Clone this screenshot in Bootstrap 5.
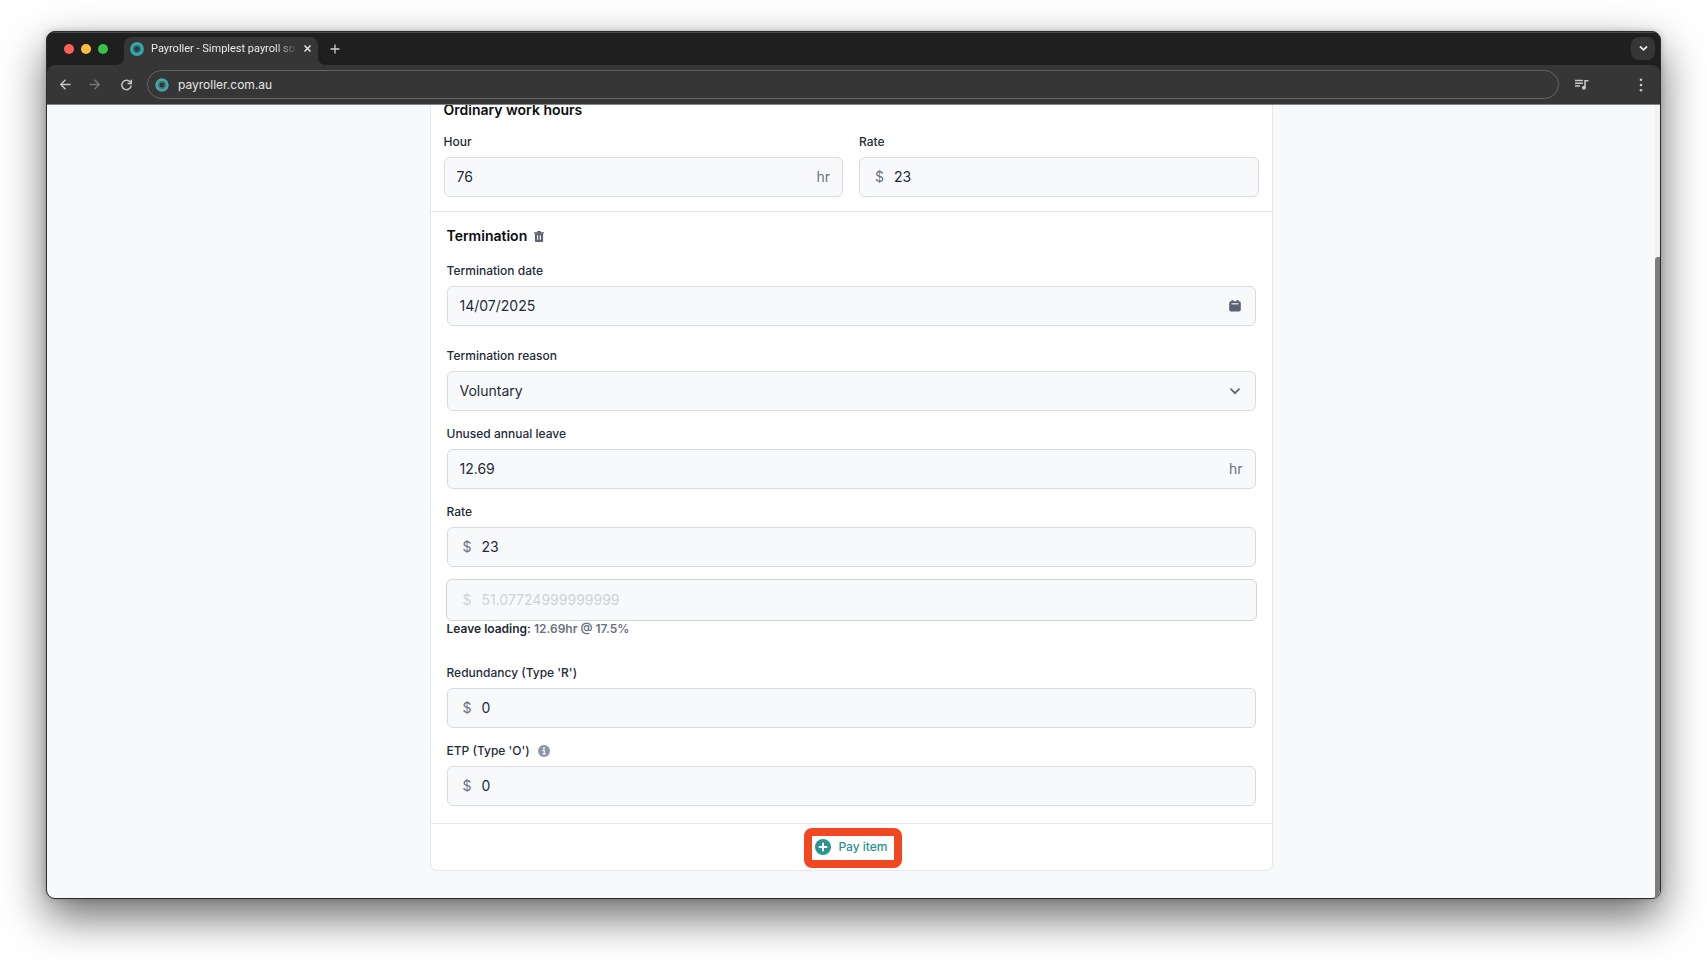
<!DOCTYPE html>
<html lang="en">
<head>
<meta charset="utf-8">
<meta name="viewport" content="width=device-width, initial-scale=1">
<title>Payroller - Simplest payroll software</title>
<link href="https://cdn.jsdelivr.net/npm/bootstrap@5.3.0/dist/css/bootstrap.min.css" rel="stylesheet">
<style>
  body { font-family: Inter, "Liberation Sans", sans-serif; font-size: 12px; line-height: 16px; color: #252b37; background: #fff; padding: 31px 46px 61px; }
  svg { display: block; flex: none; }
  button { color: inherit; }
  .plain { background: none; border: 0; padding: 0; }

  /* browser window */
  .browser { border: 1px solid #2b2b2b; border-radius: 9px; overflow: hidden; background: #1f1f1f; box-shadow: 0 18px 44px rgba(0,0,0,.58), 0 0 6px rgba(0,0,0,.2); }
  .titlebar { height: 33px; padding: 5px 5px 0 17px; box-shadow: inset 0 1px #4a4a4a; color: #dedede; }
  .lights { gap: 7px; padding-bottom: 11px; }
  .light { width: 10px; height: 10px; border-radius: 50%; }
  .light.red { background: #ff5f57; }
  .light.amber { background: #febc3f; }
  .light.green { background: #32c547; }
  .tab-item { width: 194px; height: 28px; margin-left: 16px; padding: 0 8px 5px 6px; gap: 7px; background: #363636; border-radius: 8px 8px 0 0; font: 11px/16px Roboto, "Liberation Sans", sans-serif; position: relative; }
  .tab-item::before, .tab-item::after { content: ""; position: absolute; bottom: 0; width: 8px; height: 8px; }
  .tab-item::before { left: -8px; background: radial-gradient(circle at 0 0, transparent 8px, #363636 8px); }
  .tab-item::after { right: -8px; background: radial-gradient(circle at 100% 0, transparent 8px, #363636 8px); }
  .tab-title { color: #ececec; white-space: nowrap; -webkit-mask-image: linear-gradient(90deg, #000 86%, transparent 102%); mask-image: linear-gradient(90deg, #000 86%, transparent 102%); }
  .new-tab { margin-left: 12px; padding-bottom: 11px; }
  .tab-search { width: 24px; height: 23px; border-radius: 8px; background: #363636; margin-bottom: 5px; }
  .toolbar { height: 40px; padding: 0 15px 0 12px; background: #363636; border-bottom: 1px solid #858585; border-radius: 8px 8px 0 0; color: #c7c7c7; }
  .omnibox { height: 29px; border: 1px solid #646464; border-radius: 15px; padding: 0 7px; margin-left: 15px; gap: 9px; }
  .omnibox input { background: none; border: 0; padding: 0; color: #e6e6e6; outline: 0; font-size: 12px; }
  .dim { color: #777; }

  /* page */
  .page { background: #f8f9fb; }
  .page-body { overflow: hidden; padding-bottom: 27px; }
  .pay { max-width: 843px; margin: 0 auto; background: #fff; border: 1px solid #e5e7eb; border-top: 0; border-radius: 0 0 7px 7px; }
  .ordinary { padding: 0 13px 14px; }
  .termination { padding: 14px 16px 17px; border-top: 1px solid #e5e7eb; border-bottom: 1px solid #e5e7eb; }
  h2 { font-size: 14px; line-height: 20px; font-weight: 600; color: #0b0c0f; margin: 0; }
  .ordinary h2 { line-height: 10px; margin-bottom: 19px; }
  .section-head { gap: 7px; margin-bottom: 17px; }
  label { display: block; font-weight: 500; }
  .form-row { margin-bottom: 15px; }
  .form-row.roomy { margin-bottom: 22px; }
  .field { height: 40px; margin-top: 7px; background: #f8f9fb; border: 1px solid #d8dbe1; border-radius: 6px; padding: 0 12px; font-size: 14px; color: #6b7280; }
  .field input, .field select { flex: 1; min-width: 0; border: 0; background: none; padding: 0; outline: 0; color: #252b37; appearance: none; -webkit-appearance: none; }
  .field.money { padding-left: 15px; gap: 10px; }
  .field.locked { height: 42px; margin: 12px -1px 0; padding-left: 16px; color: #cfd2d8; border-color: #d1d4db; }
  .field.locked input { color: #cfd2d8; }
  .field-icon { margin-right: 2px; }
  .loading-note { font-weight: 600; margin: 0 0 28px; }
  .loading-note span { color: #6b7280; }
  .actions { height: 46px; padding-top: 4px; }
  .pay-item { border: 8px solid #f24822; border-radius: 8px; height: 40px; width: 98px; margin-left: 3px; background: #fff; color: #2a9490; font-weight: 500; gap: 7px; padding: 0 2px 2px 0; }
  .scroll { width: 5px; padding-top: 152px; background: #f1f2f4; }
  .thumb { background: #7d7d7d; border-radius: 3px 0 0 0; height: 100%; }
</style>
</head>
<body>
<div class="browser">
  <header class="titlebar d-flex align-items-end">
    <div class="lights d-flex">
      <span class="light red"></span>
      <span class="light amber"></span>
      <span class="light green"></span>
    </div>
    <div class="tab-item d-flex align-items-center">
      <svg width="14" height="14" viewBox="0 0 14 14"><circle cx="7" cy="7" r="4.900" fill="none" stroke="#35a8ab" stroke-width="4"/><circle cx="7" cy="7" r="3.400" fill="none" stroke="#26777e" stroke-width="1.200"/></svg>
      <span class="tab-title">Payroller - Simplest payroll so</span>
      <button class="plain ms-auto" aria-label="Close tab"><svg width="11" height="11" viewBox="0 0 11 11" stroke="#e6e6e6" stroke-width="1.500"><path d="M2.500 2.500l6 6M8.500 2.500l-6 6"/></svg></button>
    </div>
    <button class="plain new-tab" aria-label="New tab"><svg width="10" height="10" viewBox="0 0 10 10" stroke="#cfcfcf" stroke-width="1.300"><path d="M5 .5v9M.5 5h9"/></svg></button>
    <button class="plain tab-search ms-auto d-flex align-items-center justify-content-center" aria-label="Search tabs"><svg width="9" height="7" viewBox="0 0 9 7" fill="none" stroke="#e6e6e6" stroke-width="1.800"><path d="M1 1.500l3.500 3.300L8 1.500"/></svg></button>
  </header>
  <nav class="toolbar d-flex align-items-center">
    <button class="plain" aria-label="Back"><svg width="13" height="13" viewBox="0 0 13 13" fill="none" stroke="currentColor" stroke-width="1.400"><path d="M11.500 6.500H2M6.500 1.800L1.800 6.500l4.700 4.700"/></svg></button>
    <button class="plain dim ms-3" aria-label="Forward"><svg width="13" height="13" viewBox="0 0 13 13" fill="none" stroke="currentColor" stroke-width="1.400"><path d="M1.500 6.500H11M6.500 1.800l4.700 4.700-4.700 4.700"/></svg></button>
    <button class="plain ms-3 ps-1" aria-label="Reload"><svg width="11" height="12" viewBox="0.500 0 11 12" fill="none" stroke="currentColor" stroke-width="1.500"><path d="M10.700 6.500A4.700 4.700 0 1 1 9.500 2.800L10.500 4"/><path d="M10.800.8v3.700H7.100"/></svg></button>
    <div class="omnibox d-flex align-items-center flex-fill">
      <svg width="14" height="14" viewBox="0 0 14 14"><circle cx="7" cy="7" r="4.700" fill="none" stroke="#4ba3a6" stroke-width="4"/><circle cx="7" cy="7" r="3.400" fill="none" stroke="#33777c" stroke-width="1.200"/></svg>
      <input class="flex-fill" aria-label="Address" value="payroller.com.au">
    </div>
    <button class="plain ms-3" aria-label="Media"><svg width="14" height="12" viewBox="0 0 14 12"><path d="M0 1.500h8M0 4.200h8M0 7h5" stroke="currentColor" stroke-width="1.500"/><path d="M10 8.500V1.700h3.400" fill="none" stroke="currentColor" stroke-width="1.600"/><circle cx="8.900" cy="8.800" r="2" fill="currentColor"/></svg></button>
    <button class="plain ms-5" aria-label="Menu"><svg width="8" height="14" viewBox="0 0 8 14" fill="currentColor"><circle cx="4" cy="1.700" r="1.300"/><circle cx="4" cy="7" r="1.300"/><circle cx="4" cy="12.300" r="1.300"/></svg></button>
  </nav>

  <div class="page d-flex">
    <main class="page-body flex-fill">
      <form class="pay">
        <section class="ordinary">
          <h2>Ordinary work hours</h2>
          <div class="row gx-3">
            <div class="col">
              <label for="hour">Hour</label>
              <div class="field d-flex align-items-center"><input id="hour" value="76"><span>hr</span></div>
            </div>
            <div class="col">
              <label for="rate">Rate</label>
              <div class="field money d-flex align-items-center"><span>$</span><input id="rate" value="23"></div>
            </div>
          </div>
        </section>

        <section class="termination">
          <div class="section-head d-flex align-items-center">
            <h2>Termination</h2>
            <button type="button" class="plain" aria-label="Delete termination"><svg width="10" height="11" viewBox="0 0 11 12"><path d="M3.500 0h4v1.200H11v1.600H0V1.200h3.500z" fill="#5d6474"/><path d="M1 2.500h9V11a1 1 0 0 1-1 1H2a1 1 0 0 1-1-1z" fill="#5d6474"/><path d="M4 4.500v5M7 4.500v5" stroke="#fff" stroke-width="1.200"/></svg></button>
          </div>
          <div class="form-row roomy">
            <label for="tdate">Termination date</label>
            <div class="field d-flex align-items-center"><input id="tdate" value="14/07/2025">
              <svg class="field-icon" width="12" height="12" viewBox="0 0 12 12"><path d="M2.500 0h1.800v1.200h3.400V0h1.800v1.200h.5a1.800 1.800 0 0 1 1.800 1.800v6.800a1.800 1.800 0 0 1-1.800 1.800H2A1.800 1.800 0 0 1 .2 9.800V3A1.800 1.800 0 0 1 2 1.200h.5z" fill="#5b6172"/><path d="M2.500 3.800h7" stroke="#e4e6eb" stroke-width="1.300"/></svg>
            </div>
          </div>
          <div class="form-row">
            <label for="reason">Termination reason</label>
            <div class="field d-flex align-items-center"><select id="reason"><option>Voluntary</option></select>
              <svg class="field-icon" width="12" height="7" viewBox="-1 0 12 7" fill="none" stroke="#5b6172" stroke-width="1.700" stroke-linecap="round"><path d="M1 1.200l4 4 4-4"/></svg>
            </div>
          </div>
          <div class="form-row">
            <label for="leave">Unused annual leave</label>
            <div class="field d-flex align-items-center"><input id="leave" value="12.69"><span>hr</span></div>
          </div>
          <label for="trate">Rate</label>
          <div class="field money d-flex align-items-center"><span>$</span><input id="trate" value="23"></div>
          <div class="field money locked d-flex align-items-center"><span>$</span><input aria-label="Leave loading" value="51.07724999999999" disabled></div>
          <p class="loading-note">Leave loading: <span>12.69hr @ 17.5%</span></p>
          <div class="form-row">
            <label for="red">Redundancy (Type 'R')</label>
            <div class="field money d-flex align-items-center"><span>$</span><input id="red" value="0"></div>
          </div>
          <div>
            <div class="d-flex align-items-center gap-2">
              <label for="etp">ETP (Type 'O')</label>
              <svg width="12" height="12" viewBox="0 0 12 12"><circle cx="6" cy="6" r="6" fill="#9096a5"/><circle cx="6" cy="3.200" r="1" fill="#fff"/><path d="M4.500 5.400h1.700v3.400M4.400 9h3.400" fill="none" stroke="#fff" stroke-width="1.200"/></svg>
            </div>
            <div class="field money d-flex align-items-center"><span>$</span><input id="etp" value="0"></div>
          </div>
        </section>

        <div class="actions d-flex justify-content-center">
          <button type="button" class="pay-item d-flex align-items-center justify-content-center"><svg width="16" height="16" viewBox="0 0 16 16"><circle cx="8" cy="8" r="8" fill="#2a9490"/><path d="M8 4.500v7M4.500 8h7" stroke="#fff" stroke-width="2" stroke-linecap="round"/></svg>Pay item</button>
        </div>
      </form>
    </main>
    <div class="scroll"><div class="thumb"></div></div>
  </div>
</div>
<script src="https://cdn.jsdelivr.net/npm/bootstrap@5.3.0/dist/js/bootstrap.bundle.min.js"></script>
</body>
</html>
